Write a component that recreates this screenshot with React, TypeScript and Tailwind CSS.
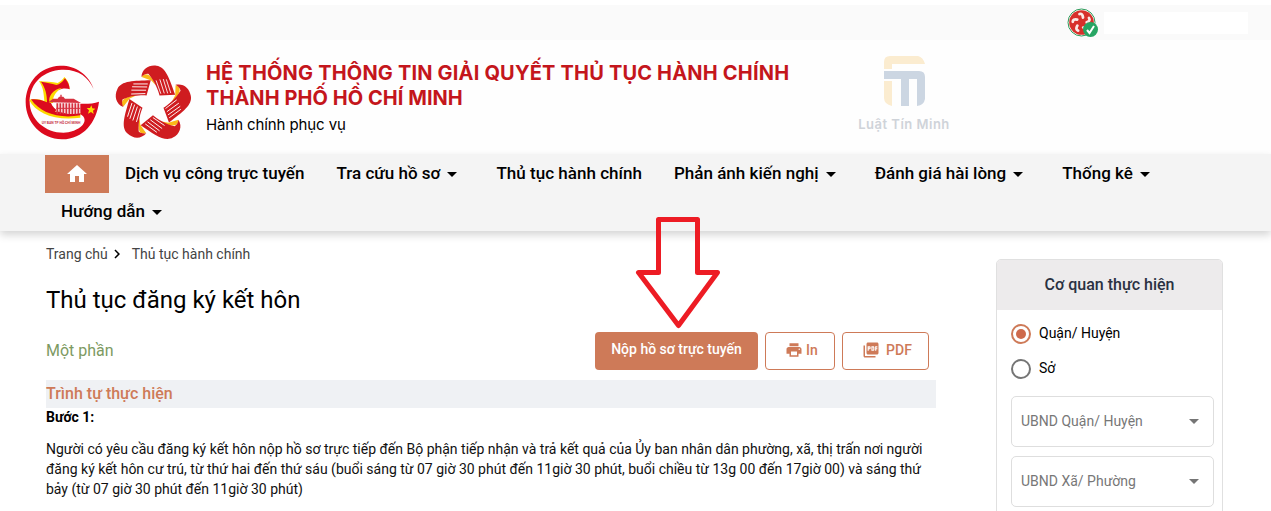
import { MdArrowDropDown, MdHome, MdNavigateNext, MdPictureAsPdf, MdPrint } from 'react-icons/md';

const menu = [
  { label: 'Dịch vụ công trực tuyến', dropdown: false },
  { label: 'Tra cứu hồ sơ', dropdown: true },
  { label: 'Thủ tục hành chính', dropdown: false },
  { label: 'Phản ánh kiến nghị', dropdown: true },
  { label: 'Đánh giá hài lòng', dropdown: true },
  { label: 'Thống kê', dropdown: true },
  { label: 'Hướng dẫn', dropdown: true },
];

const steps = [
  'Người có yêu cầu đăng ký kết hôn nộp hồ sơ trực tiếp đến Bộ phận tiếp nhận và trả kết quả của Ủy ban nhân dân phường, xã, thị trấn nơi người',
  'đăng ký kết hôn cư trú, từ thứ hai đến thứ sáu (buổi sáng từ 07 giờ 30 phút đến 11giờ 30 phút, buổi chiều từ 13g 00 đến 17giờ 00) và sáng thứ',
  'bảy (từ 07 giờ 30 phút đến 11giờ 30 phút)',
];

const CityLogo = () => (
  <svg className="h-[75px] w-[75px]" viewBox="0 0 225 225">
    {/* ring */}
    <path
      d="M206 72 C190 24 145 0 105 2 C45 4 2 52 2 112 C2 174 52 224 112 223 C175 222 215 172 222 110 C205 116 185 117 164 116 L164 146 C192 160 180 190 130 202 C70 210 14 168 14 110 C14 50 60 16 110 14 C160 12 190 36 206 72 Z"
      fill="#dc0a1e"
    />
    {/* petals */}
    <path d="M12 104 C30 100 44 102 58 108 C56 86 56 70 42 48 C62 50 82 50 98 54 C106 50 114 44 118 36 C128 46 134 56 134 74 L90 140 L166 142 V158 C90 168 34 146 12 104 Z" fill="#fcd900" />
    <path d="M18 103 C36 102 50 104 66 112 C66 90 62 70 48 50 C66 54 80 54 94 60 C104 58 112 52 120 40 C129 52 134 60 134 76 L90 140 L166 140 V151 C100 162 46 144 18 103 Z" fill="#dc0a1e" />
    <path d="M78 114 C74 98 84 76 112 71 C142 68 164 84 166 112 V145 C126 152 88 142 78 114 Z" fill="#fff" />
    <path d="M74 114 C68 94 84 72 112 68 C94 78 82 92 84 114 Z" fill="#fcd900" />
    {/* town hall */}
    <path d="M70 112 L84 101 H98 L102 95 H106 V89 H110 V95 H115 L120 101 H146 L168 114 Z" fill="#d7313f" />
    <path d="M97 115 V147 M106 115 V147 M115 115 V148 M124 115 V148 M133 115 V148 M142 115 V148 M151 115 V148 M160 115 V148" stroke="#d7313f" strokeWidth="5.500" />
    <path d="M94 130 H166" stroke="#d7313f" strokeWidth="3" />
    <path d="M199 121 L202 130 L211 131 L204 137 L206 147 L198 141 L189 146 L192 136 L185 129 L195 129 Z" fill="#fcd900" />
    <text x="50" y="177" fontSize="9" fontWeight="700" textLength="116" lengthAdjust="spacingAndGlyphs" fill="#c83246" fontFamily="Roboto">
      ỦY BAN TP HỒ CHÍ MINH
    </text>
  </svg>
);

const HandStar = () => (
  <svg className="h-[78px] w-[80px]" viewBox="-117 -115 234 228">
    {[0, 72, 144, 216, 288].map((angle) => (
      <g key={angle} transform={`rotate(${angle})`}>
        <path d="M-33 -80 C-27 -92 -8 -96 8 -56 L-5 -70 Z" fill="#fbb918" />
        <path d="M-34 -80 C-32 -104 -12 -116 10 -113 C38 -110 48 -74 65 -28 L19 -26 C16 -40 6 -66 -13 -89 C-22 -90 -29 -85 -34 -80 Z" fill="#cf1c20" />
        <path d="M9 -70 L23 -31 M20 -73 L33 -32 M30 -74 L43 -32 M39 -73 L52 -33" stroke="#fff" strokeWidth="2.500" />
      </g>
    ))}
  </svg>
);

const Avatar = () => (
  <svg className="h-[30px] w-[32px]" viewBox="0 0 32 30">
    <circle cx="14.500" cy="14.500" r="13.500" fill="#fff" stroke="#2b9a58" />
    <circle cx="14.500" cy="14.500" r="12.300" fill="#d7302b" />
    {[0, 72, 144, 216, 288].map((angle) => (
      <path key={angle} d="M12.500 6 q3 -1 3.500 3.500" transform={`rotate(${angle} 14.5 14.5)`} fill="none" stroke="#fbe9e7" strokeWidth="2.800" strokeLinecap="round" />
    ))}
    <circle cx="23.500" cy="21.500" r="7.500" fill="#26a563" />
    <path d="M20 22 l2.500 3 l4.500 -7" fill="none" stroke="#fff" strokeWidth="2" />
  </svg>
);

const Watermark = () => (
  <div className="flex w-[92px] flex-col items-center">
    <svg className="h-[50px] w-[41px]" viewBox="0 0 41 50">
      <path d="M0 13 V6 Q0 0 6 0 H34 Q39 1 41 8 H8 V13 Z" fill="#fbecd0" />
      <path d="M0 25 H8 V50 Q0 48 0 42 Z" fill="#fbecd0" />
      <path d="M0 15 H35 Q41 15 41 21 V43 Q40 49 33 50 V23 H25 V50 H17 V23 H0 Z" fill="#ccd6e2" />
    </svg>
    <span className="mt-[8px] font-[Inter] text-[13px] leading-5 font-semibold tracking-[0.5px] whitespace-nowrap text-[#cfd3d9]">Luật Tín Minh</span>
  </div>
);

const Select = ({ label }: { label: string }) => (
  <div className="flex h-[51px] items-center justify-between rounded-[5px] border border-[#dedede] pr-[7px] pb-px pl-[9px] text-[#777]">
    <span>{label}</span>
    <MdArrowDropDown className="h-6 w-6 text-[#757575]" />
  </div>
);

export default function App() {
  return (
    <div className="h-[511px] overflow-hidden bg-white pt-[5px] font-[Roboto,sans-serif] text-sm text-black">
      <div className="flex h-[35px] items-center bg-[#fafafa] pl-[1067px]">
        <Avatar />
        <div className="ml-[5px] h-[22px] w-[144px] bg-white" />
      </div>

      <header className="flex h-[114px] items-start bg-[#fefefe]">
        <div className="mt-[25px] ml-[25px]"><CityLogo /></div>
        <div className="mt-[25px] ml-[13px]"><HandStar /></div>
        <div className="mt-[21px] ml-[13px] w-[600px] font-[Inter,sans-serif] whitespace-nowrap">
          <h1 className="text-[20px] leading-[25px] font-bold tracking-[0.18px] text-[#c4161c]">
            HỆ THỐNG THÔNG TIN GIẢI QUYẾT THỦ TỤC HÀNH CHÍNH
            <br />
            <span className="tracking-[0.05px]">THÀNH PHỐ HỒ CHÍ MINH</span>
          </h1>
          <p className="mt-[3px] text-[15px] leading-[22px] tracking-[-0.1px]">Hành chính phục vụ</p>
        </div>
        <div className="mt-[16px] ml-[52px]"><Watermark /></div>
      </header>

      <nav className="relative flex h-[77px] flex-wrap content-start bg-[#f4f4f4] pt-px pr-[80px] pl-[45px] text-[17px] font-medium tracking-[0.02px] shadow-[0_4px_8px_rgba(0,0,0,0.17)]">
        <a className="flex h-[38px] w-16 items-center justify-center bg-[#ce7a58] text-white">
          <MdHome className="h-6 w-6" />
        </a>
        {menu.map((item) => (
          <a key={item.label} className="flex h-[38px] items-center px-4 whitespace-nowrap">
            <span className="pb-[2px]">{item.label}</span>
            {item.dropdown && <MdArrowDropDown className="h-6 w-6" />}
          </a>
        ))}
      </nav>

      <div className="flex">
        <main className="ml-[46px] w-[890px]">
          <div className="mt-[13px] flex h-5 items-center text-[#444]">
            <span>Trang chủ</span>
            <MdNavigateNext className="mr-[6px] h-[18px] w-[18px] text-black" />
            <span>Thủ tục hành chính</span>
          </div>
          <h2 className="mt-[20px] text-2xl leading-8">Thủ tục đăng ký kết hôn</h2>
          <div className="mt-[16px] flex h-[38px] items-center">
            <span className="text-base text-[#7d9a62]">Một phần</span>
            <div className="mr-[7px] ml-auto flex gap-[7px] font-medium text-[#ce7a58]">
              <button className="h-[38px] w-[163px] rounded bg-[#ce7a58] pb-[4px] text-white">Nộp hồ sơ trực tuyến</button>
              <button className="flex h-[38px] w-[70px] items-center justify-center gap-[3px] rounded border border-[#ce7a58] pb-[2px] pl-[3px]">
                <MdPrint className="h-[18px] w-[18px]" />
                In
              </button>
              <button className="flex h-[38px] w-[87px] items-center justify-center gap-[6px] rounded border border-[#ce7a58] pb-[2px] pl-[3px]">
                <MdPictureAsPdf className="h-[18px] w-[18px]" />
                PDF
              </button>
            </div>
          </div>
          <h3 className="mt-[10px] h-7 bg-[#eff1f4] text-base leading-[27px] font-medium text-[#ce7a58]">Trình tự thực hiện</h3>
          <p className="leading-[19px] font-bold">Bước 1:</p>
          <div className="mt-[12px] leading-5 whitespace-nowrap text-[#111]">
            {steps.map((line) => (
              <p key={line}>{line}</p>
            ))}
          </div>
        </main>

        <aside className="mt-[28px] ml-[60px] h-[300px] w-[227px] rounded-[5px] border border-[#e0e0e0]">
          <h4 className="h-[50px] rounded-t bg-[#edebec] text-center text-base leading-[50px] font-medium text-[#2a3142]">Cơ quan thực hiện</h4>
          <div className="pr-[8px] pl-[14px]">
            <label className="mt-[14px] flex h-5 items-center gap-2">
              <span className="flex h-5 w-5 items-center justify-center rounded-full border-2 border-[#ce7a58]">
                <span className="h-[10px] w-[10px] rounded-full bg-[#ce6a4c]" />
              </span>
              <span className="pb-[2px]">Quận/ Huyện</span>
            </label>
            <label className="mt-[15px] mb-[17px] flex h-5 items-center gap-2">
              <span className="h-5 w-5 rounded-full border-2 border-[#757575]" />
              <span className="pb-[2px]">Sở</span>
            </label>
            <div className="flex flex-col gap-[9px]">
              <Select label="UBND Quận/ Huyện" />
              <Select label="UBND Xã/ Phường" />
            </div>
          </div>
        </aside>
      </div>

      <svg className="absolute top-[215px] left-[634px] h-[116px] w-[90px]" viewBox="634 215 90 116">
        <path d="M658.500 219.500 H697.500 V272.500 H717.500 L678.500 325.500 L638.500 272.500 H658.500 Z" fill="none" stroke="#ed1c24" strokeWidth="5" strokeLinejoin="round" />
      </svg>
    </div>
  );
}
